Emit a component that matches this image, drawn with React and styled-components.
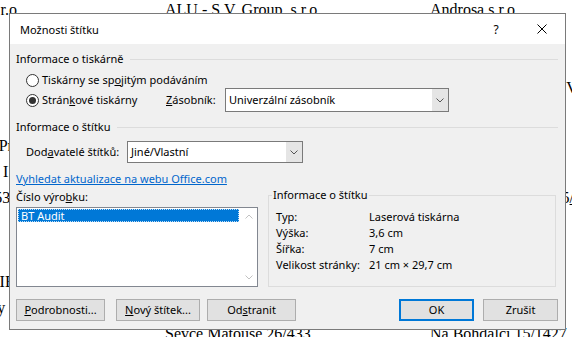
import React from 'react';
import styled, { createGlobalStyle } from 'styled-components';

const GlobalStyle = createGlobalStyle`
  html, body { margin: 0; padding: 0; background: #fff; }
  body { width: 572px; height: 337px; overflow: hidden; }
`;

const Screen = styled.div`
  position: relative;
  width: 572px;
  height: 337px;
  overflow: hidden;
  background: #fff;
`;

/* ---------- background document (label sheet) ---------- */
const Sheet = styled.div`
  display: grid;
  grid-template-columns: repeat(3, 265px);
  grid-auto-rows: 136px;
  margin: -3px 0 0 -100px;
  font-family: "Liberation Serif", "Times New Roman", serif;
  font-size: 16px;
  line-height: 26px;
  color: #000;
`;
const LabelCell = styled.div`
  display: flex;
  flex-direction: column;
  white-space: nowrap;
`;
const DocLine = styled.div`
  height: 26px;
`;
const Marked = styled.span`
  text-decoration: underline;
`;

const labels = [
  [
    ['Alfa Trading, s.r.o.', 'Husova 12', '602 00 Brno', ''],
    ['ALU - S.V. Group, s.r.o.', 'Průmyslová 1430/6', '108 00 Praha 10', ''],
    ['Androsa s.r.o.', 'Ing. Pavel Dostál', 'Korunní 810/104', '10900 Praha 10 - Na Vinicích'],
  ],
  [
    ['Stavební firma Praha', 'Provozovna Jih II', 'U Pankráce 1653/12', 'Praha 4'],
    ['Elektro Novák s.r.o.', 'Jan Novák', 'Vinohradská 25', 'Praha 2'],
    ['Kovo Brno, a.s.', 'Petra Malá', ['Jana Želivského 2165', '/5'], '130 00 Praha 3'],
  ],
  [
    ['Centrum, AMBIENTE a.s.', 'Oddělení správy', 'Lidická 12', ''],
    ['Pekárna Matouš', 'Jiří Matouš', 'Sevce Matouše 26/433', ''],
    ['Hobby s.r.o.', 'Eva Horáková', 'Na Bohdalci 15/1427', ''],
  ],
];

/* ---------- dialog ---------- */
const Dialog = styled.div`
  position: absolute;
  left: 9px;
  top: 13px;
  width: 557px;
  height: 317px;
  box-sizing: border-box;
  border: 1px solid #7a7a7a;
  background: #f0f0f0;
  display: flex;
  flex-direction: column;
  font-family: "Noto Sans", "Open Sans", sans-serif;
  font-size: 11px;
  color: #000;
`;
const TitleBar = styled.div`
  flex: none;
  height: 30px;
  background: #fff;
  display: flex;
  align-items: center;
  padding-left: 10px;
`;
const Title = styled.div`
  flex: 1;
  font-size: 11px;
`;
const TitleButton = styled.div`
  width: 46px;
  height: 30px;
  display: flex;
  align-items: center;
  justify-content: center;
  font-size: 12px;
`;
const Body = styled.div`
  flex: 1;
  display: flex;
  flex-direction: column;
  padding: 7px 7px 0 6px;
  line-height: 16px;
`;
const SectionHeader = styled.div`
  display: flex;
  align-items: center;
  gap: 6px;
  height: 16px;
  margin-top: ${(p) => p.$mt || 0}px;
  &::after {
    content: '';
    flex: 1;
    height: 1px;
    background: #dcdcdc;
  }
`;
const Indented = styled.div`
  display: flex;
  flex-direction: column;
  padding-left: 10px;
  margin-top: ${(p) => p.$mt || 0}px;
`;
const Row = styled.div`
  display: flex;
  align-items: center;
  height: ${(p) => p.$h}px;
`;
const RadioLabel = styled.div`
  display: flex;
  align-items: center;
  gap: 3px;
  width: ${(p) => (p.$w ? `${p.$w}px` : 'auto')};
`;
const RadioDot = styled.span`
  width: 13px;
  height: 13px;
  box-sizing: border-box;
  border: 1px solid #333;
  border-radius: 50%;
  background: #fff;
  display: flex;
  align-items: center;
  justify-content: center;
  &::after {
    content: '';
    width: 7px;
    height: 7px;
    border-radius: 50%;
    background: ${(p) => (p.$checked ? '#333' : 'transparent')};
  }
`;
const FieldLabel = styled.div`
  width: ${(p) => p.$w}px;
  flex: none;
`;
const U = styled.span`
  text-decoration: underline;
`;
const Combo = styled.div`
  display: flex;
  width: ${(p) => p.$w}px;
  height: ${(p) => p.$h}px;
  box-sizing: border-box;
  border: 1px solid #7a7a7a;
  background: #fff;
`;
const ComboText = styled.div`
  flex: 1;
  display: flex;
  align-items: center;
  padding-left: 3px;
`;
const ComboButton = styled.div`
  width: 16px;
  background: #e5e5e5;
  display: flex;
  align-items: center;
  justify-content: center;
`;
const Link = styled.a`
  align-self: flex-start;
  margin-top: 8px;
  color: #0066cc;
  text-decoration: underline;
`;
const BottomArea = styled.div`
  display: grid;
  grid-template-columns: 242px 288px;
  column-gap: 10px;
  align-items: end;
`;
const LeftCol = styled.div`
  display: flex;
  flex-direction: column;
  gap: 2px;
`;
const ListBox = styled.div`
  height: 80px;
  box-sizing: border-box;
  border: 1px solid #828790;
  background: #fff;
  display: flex;
`;
const ListItems = styled.div`
  flex: 1;
  padding: 1px;
`;
const ListItem = styled.div`
  height: 13px;
  box-sizing: border-box;
  border: 1px dotted rgba(255, 255, 255, 0.75);
  background: #0078d7;
  color: #fff;
  padding-left: 2px;
  line-height: 11px;
`;
const ScrollBar = styled.div`
  width: 17px;
  display: flex;
  flex-direction: column;
  justify-content: space-between;
`;
const ScrollArrow = styled.div`
  height: 17px;
  display: flex;
  align-items: center;
  justify-content: center;
`;
const GroupBox = styled.fieldset`
  margin: 0;
  padding: 6px 4px 0 3px;
  height: 100px;
  box-sizing: border-box;
  min-width: 0;
  border: 1px solid #dcdcdc;
`;
const GroupLegend = styled.legend`
  padding: 0 1px;
  line-height: 16px;
`;
const InfoGrid = styled.div`
  display: grid;
  grid-template-columns: 93px 1fr;
  padding-left: 4px;
  line-height: 16px;
`;
const ButtonRow = styled.div`
  display: flex;
  margin-top: 12px;
`;
const Button = styled.div`
  width: ${(p) => p.$w}px;
  height: 22px;
  box-sizing: border-box;
  margin-left: ${(p) => (p.$auto ? 'auto' : `${p.$ml || 0}px`)};
  border: ${(p) => (p.$primary ? '2px solid #0078d7' : '1px solid #adadad')};
  background: #e1e1e1;
  display: flex;
  align-items: center;
  justify-content: center;
`;

const ChevronDown = ({ color = '#555' }) => (
  <svg width="8" height="5" viewBox="0 0 8 5">
    <path d="M0.5 0.5L4 4L7.5 0.5" fill="none" stroke={color} strokeWidth="1" />
  </svg>
);
const ChevronUp = ({ color = '#555' }) => (
  <svg width="8" height="5" viewBox="0 0 8 5">
    <path d="M0.5 4.5L4 1L7.5 4.5" fill="none" stroke={color} strokeWidth="1" />
  </svg>
);
const CloseIcon = () => (
  <svg width="10" height="10" viewBox="0 0 10 10">
    <path d="M0.5 0.5L9.5 9.5M9.5 0.5L0.5 9.5" fill="none" stroke="#000" strokeWidth="1" />
  </svg>
);

export default function App() {
  return (
    <Screen>
      <GlobalStyle />
      <Sheet>
        {labels.flat().map((cell, i) => (
          <LabelCell key={i}>
            {cell.map((line, j) => (
              <DocLine key={j}>
                {Array.isArray(line) ? (
                  <>
                    {line[0]}
                    <Marked>{line[1]}</Marked>
                  </>
                ) : (
                  line
                )}
              </DocLine>
            ))}
          </LabelCell>
        ))}
      </Sheet>

      <Dialog>
        <TitleBar>
          <Title>Možnosti štítku</Title>
          <TitleButton>?</TitleButton>
          <TitleButton>
            <CloseIcon />
          </TitleButton>
        </TitleBar>
        <Body>
          <SectionHeader>Informace o tiskárně</SectionHeader>
          <Indented $mt={5}>
            <Row $h={16}>
              <RadioLabel>
                <RadioDot />
                <span>
                  Tiskárny se sp<U>o</U>jitým podáváním
                </span>
              </RadioLabel>
            </Row>
            <Row $h={24}>
              <RadioLabel $w={140}>
                <RadioDot $checked />
                <span>
                  Strán<U>k</U>ové tiskárny
                </span>
              </RadioLabel>
              <FieldLabel $w={59}>
                <U>Z</U>ásobník:
              </FieldLabel>
              <Combo $w={224} $h={24}>
                <ComboText>Univerzální zásobník</ComboText>
                <ComboButton>
                  <ChevronDown />
                </ComboButton>
              </Combo>
            </Row>
          </Indented>

          <SectionHeader $mt={7}>Informace o štítku</SectionHeader>
          <Indented $mt={6}>
            <Row $h={22}>
              <FieldLabel $w={101}>
                Dod<U>a</U>vatelé štítků:
              </FieldLabel>
              <Combo $w={176} $h={22}>
                <ComboText>Jiné/Vlastní</ComboText>
                <ComboButton>
                  <ChevronDown />
                </ComboButton>
              </Combo>
            </Row>
          </Indented>

          <Link>Vyhledat aktualizace na webu Office.com</Link>

          <BottomArea>
            <LeftCol>
              <div>
                Číslo výro<U>b</U>ku:
              </div>
              <ListBox>
                <ListItems>
                  <ListItem>BT Audit</ListItem>
                </ListItems>
                <ScrollBar>
                  <ScrollArrow>
                    <ChevronUp color="#c2c2c2" />
                  </ScrollArrow>
                  <ScrollArrow>
                    <ChevronDown color="#c2c2c2" />
                  </ScrollArrow>
                </ScrollBar>
              </ListBox>
            </LeftCol>
            <GroupBox>
              <GroupLegend>Informace o štítku</GroupLegend>
              <InfoGrid>
                <span>Typ:</span>
                <span>Laserová tiskárna</span>
                <span>Výška:</span>
                <span>3,6 cm</span>
                <span>Šířka:</span>
                <span>7 cm</span>
                <span>Velikost stránky:</span>
                <span>21 cm × 29,7 cm</span>
              </InfoGrid>
            </GroupBox>
          </BottomArea>

          <ButtonRow>
            <Button $w={89}>
              <span>
                <U>P</U>odrobnosti...
              </span>
            </Button>
            <Button $w={84} $ml={11}>
              <span>
                <U>N</U>ový štítek...
              </span>
            </Button>
            <Button $w={89} $ml={7}>
              <span>
                Od<U>s</U>tranit
              </span>
            </Button>
            <Button $w={75} $auto $primary>
              OK
            </Button>
            <Button $w={75} $ml={9}>
              Zrušit
            </Button>
          </ButtonRow>
        </Body>
      </Dialog>
    </Screen>
  );
}
